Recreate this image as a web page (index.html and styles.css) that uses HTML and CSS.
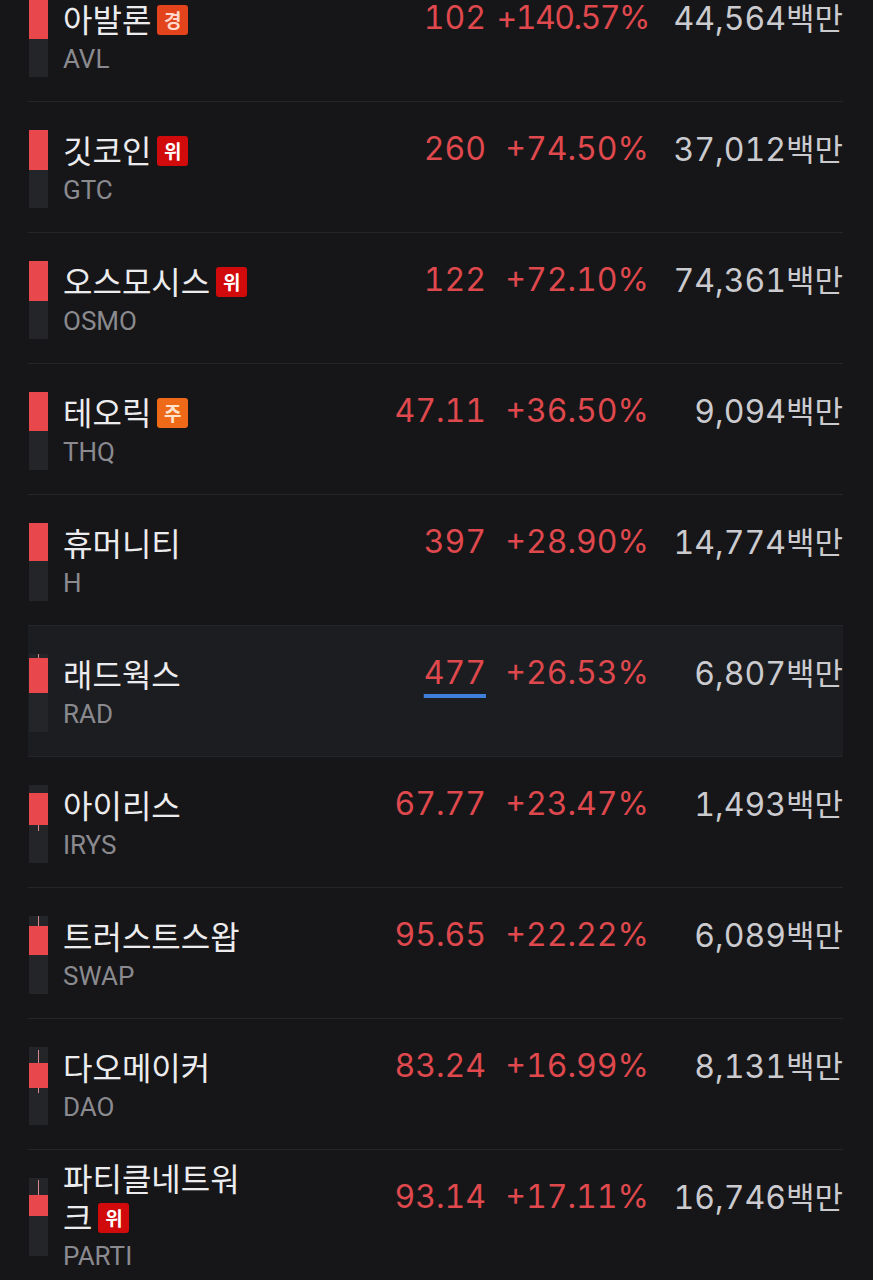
FILE: index.html
```html
<!DOCTYPE html>
<html lang="ko">
<head>
    <meta charset="UTF-8">
    <meta name="viewport" content="width=device-width, initial-scale=1.0">
    <title>상승률 순위</title>
    <link rel="stylesheet" href="styles.css">
</head>
<body>
    <div class="list">

        <div class="row">
            <svg class="candle" viewBox="0 0 19 78"><rect class="track" x="0" y="0" width="19" height="78"/><rect class="body" x="0" y="1" width="19" height="39"/></svg>
            <div class="info">
                <div class="top">
                    <div class="name">아발론<span class="badge warn">경</span></div>
                    <div class="price">102</div>
                    <div class="change fit">+140.57%</div>
                    <div class="vol">44,564<span class="unit">백만</span></div>
                </div>
                <div class="ticker">AVL</div>
            </div>
        </div>

        <div class="row">
            <svg class="candle" viewBox="0 0 19 78"><rect class="track" x="0" y="0" width="19" height="78"/><rect class="body" x="0" y="0" width="19" height="40"/></svg>
            <div class="info">
                <div class="top">
                    <div class="name">깃코인<span class="badge risk">위</span></div>
                    <div class="price">260</div>
                    <div class="change">+74.50%</div>
                    <div class="vol">37,012<span class="unit">백만</span></div>
                </div>
                <div class="ticker">GTC</div>
            </div>
        </div>

        <div class="row">
            <svg class="candle" viewBox="0 0 19 78"><rect class="track" x="0" y="0" width="19" height="78"/><rect class="body" x="0" y="0" width="19" height="40"/></svg>
            <div class="info">
                <div class="top">
                    <div class="name">오스모시스<span class="badge risk">위</span></div>
                    <div class="price">122</div>
                    <div class="change">+72.10%</div>
                    <div class="vol">74,361<span class="unit">백만</span></div>
                </div>
                <div class="ticker">OSMO</div>
            </div>
        </div>

        <div class="row">
            <svg class="candle" viewBox="0 0 19 78"><rect class="track" x="0" y="0" width="19" height="78"/><rect class="body" x="0" y="0" width="19" height="39"/></svg>
            <div class="info">
                <div class="top">
                    <div class="name">테오릭<span class="badge note">주</span></div>
                    <div class="price">47.11</div>
                    <div class="change">+36.50%</div>
                    <div class="vol">9,094<span class="unit">백만</span></div>
                </div>
                <div class="ticker">THQ</div>
            </div>
        </div>

        <div class="row">
            <svg class="candle" viewBox="0 0 19 78"><rect class="track" x="0" y="0" width="19" height="78"/><rect class="body" x="0" y="0" width="19" height="38"/></svg>
            <div class="info">
                <div class="top">
                    <div class="name">휴머니티</div>
                    <div class="price">397</div>
                    <div class="change">+28.90%</div>
                    <div class="vol">14,774<span class="unit">백만</span></div>
                </div>
                <div class="ticker">H</div>
            </div>
        </div>

        <div class="row active">
            <svg class="candle" viewBox="0 0 19 78"><rect class="track" x="0" y="0" width="19" height="78"/><rect class="wick" x="9" y="0" width="1" height="5"/><rect class="body" x="0" y="4" width="19" height="35"/></svg>
            <div class="info">
                <div class="top">
                    <div class="name">래드웍스</div>
                    <div class="price"><span class="focus">477</span></div>
                    <div class="change">+26.53%</div>
                    <div class="vol">6,807<span class="unit">백만</span></div>
                </div>
                <div class="ticker">RAD</div>
            </div>
        </div>

        <div class="row">
            <svg class="candle" viewBox="0 0 19 78"><rect class="track" x="0" y="0" width="19" height="78"/><rect class="wick" x="9" y="39" width="1" height="7"/><rect class="body" x="0" y="8" width="19" height="32"/></svg>
            <div class="info">
                <div class="top">
                    <div class="name">아이리스</div>
                    <div class="price">67.77</div>
                    <div class="change">+23.47%</div>
                    <div class="vol">1,493<span class="unit">백만</span></div>
                </div>
                <div class="ticker">IRYS</div>
            </div>
        </div>

        <div class="row">
            <svg class="candle" viewBox="0 0 19 78"><rect class="track" x="0" y="0" width="19" height="78"/><rect class="wick" x="9" y="0" width="1" height="11"/><rect class="body" x="0" y="10" width="19" height="29"/></svg>
            <div class="info">
                <div class="top">
                    <div class="name">트러스트스왑</div>
                    <div class="price">95.65</div>
                    <div class="change">+22.22%</div>
                    <div class="vol">6,089<span class="unit">백만</span></div>
                </div>
                <div class="ticker">SWAP</div>
            </div>
        </div>

        <div class="row">
            <svg class="candle" viewBox="0 0 19 78"><rect class="track" x="0" y="0" width="19" height="78"/><rect class="wick" x="9" y="3" width="1" height="43"/><rect class="body" x="0" y="16" width="19" height="25"/></svg>
            <div class="info">
                <div class="top">
                    <div class="name">다오메이커</div>
                    <div class="price">83.24</div>
                    <div class="change">+16.99%</div>
                    <div class="vol">8,131<span class="unit">백만</span></div>
                </div>
                <div class="ticker">DAO</div>
            </div>
        </div>

        <div class="row">
            <svg class="candle" viewBox="0 0 19 78"><rect class="track" x="0" y="0" width="19" height="78"/><rect class="wick" x="9" y="2" width="1" height="16"/><rect class="body" x="0" y="17" width="19" height="21"/></svg>
            <div class="info">
                <div class="top">
                    <div class="name">파티클네트워크<span class="badge risk">위</span></div>
                    <div class="price">93.14</div>
                    <div class="change">+17.11%</div>
                    <div class="vol">16,746<span class="unit">백만</span></div>
                </div>
                <div class="ticker">PARTI</div>
            </div>
        </div>

    </div>
</body>
</html>
```

FILE: styles.css
```css
body {
    margin: 0;
    background: #161619;
    color: #ececee;
    font-family: 'Roboto', 'Noto Sans CJK KR', sans-serif;
    overflow: hidden;
}

.list {
    margin-top: -29px;
    padding: 0 30px 0 28px;
}

.row {
    display: flex;
    align-items: center;
    gap: 15px;
    height: 126px;
    padding: 4px 0 0 1px;
    border-bottom: 1px solid #25262a;
}

.row.active {
    background: #1c1d21;
}

/* candle chart */
.candle {
    flex: none;
    width: 19px;
    height: 78px;
}

.candle .track {
    fill: #242529;
}

.candle .body {
    fill: #e8474b;
}

.candle .wick {
    fill: #d88a8c;
}

.info {
    flex: 1;
    display: flex;
    flex-direction: column;
}

.top {
    display: flex;
    align-items: center;
}

.name {
    flex: 1;
    max-width: 200px;
    margin-right: auto;
    font-family: 'Noto Sans CJK KR', sans-serif;
    font-size: 32px;
    line-height: 39px;
    color: #ececee;
}

.badge {
    display: inline-block;
    width: 31px;
    height: 30px;
    margin-left: 6px;
    border-radius: 3px;
    font-size: 19px;
    font-weight: 700;
    line-height: 30px;
    text-align: center;
    vertical-align: 4px;
    color: #fff;
}

.badge.warn {
    background: #e3441c;
    color: #ffd9cc;
}

.badge.risk {
    background: #d10b0b;
}

.badge.note {
    background: #ee6a18;
    color: #ffe2cc;
}

.price,
.change,
.vol {
    flex: none;
    font-family: 'Inter', 'Noto Sans CJK KR', sans-serif;
    font-size: 32px;
    font-variant-numeric: tabular-nums;
    line-height: 40px;
    text-align: right;
    white-space: nowrap;
}

.price {
    width: 122px;
    color: #df484c;
}

.change {
    width: 163px;
    color: #df484c;
}

/* long values are squeezed to fit the column */
.change.fit {
    letter-spacing: -1.5px;
}

.vol {
    width: 194px;
    color: #cbcbcf;
}

.unit {
    font-family: 'Noto Sans CJK KR', sans-serif;
    font-size: 31px;
}

.focus {
    text-decoration: underline;
    text-decoration-color: #3d7fd9;
    text-decoration-thickness: 4px;
    text-underline-offset: 10px;
}

.ticker {
    font-size: 26px;
    line-height: 40px;
    color: #8a8a8f;
}
```
